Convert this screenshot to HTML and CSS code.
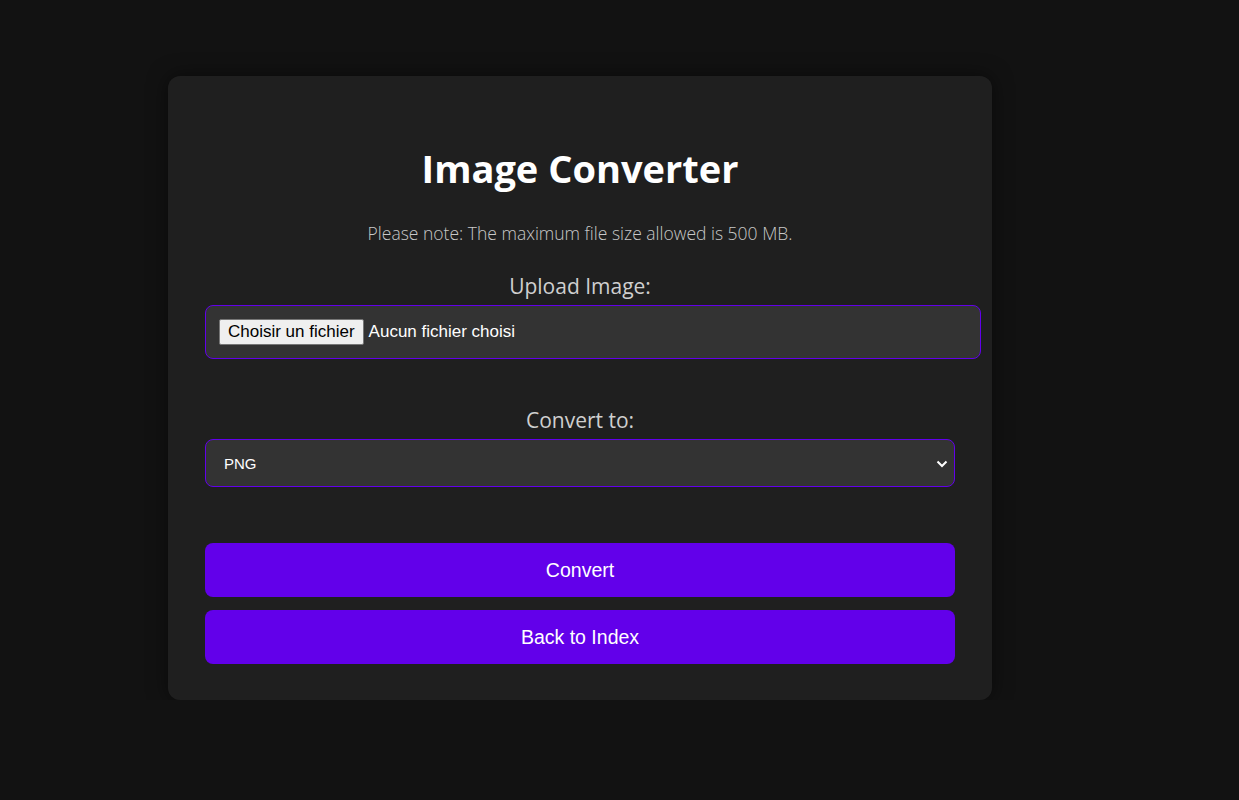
FILE: index.html
```html
<!DOCTYPE html>
<html lang="fr">
<head>
<meta charset="utf-8">
<title>Image Converter</title>
<link rel="stylesheet" href="styles.css">
</head>
<body>
<main class="card">
  <h1 class="title">Image Converter</h1>
  <p class="note">Please note: The maximum file size allowed is 500 MB.</p>
  <form class="form">
    <label class="label" for="file">Upload Image:</label>
    <div class="file-input">
      <label class="file-btn" for="file">Choisir un fichier</label>
      <span class="file-name">Aucun fichier choisi</span>
      <input id="file" class="file-hidden" type="file">
    </div>
    <label class="label label-convert" for="fmt">Convert to:</label>
    <div class="select-wrap">
      <select id="fmt" class="select">
        <option>PNG</option>
        <option>JPEG</option>
        <option>WEBP</option>
        <option>GIF</option>
      </select>
      <svg class="chev" width="12" height="8" viewBox="0 0 12 8"><path d="M1.5 1.5 L6 6 L10.5 1.5" fill="none" stroke="#ffffff" stroke-width="2"/></svg>
    </div>
    <button type="button" class="btn btn-convert">Convert</button>
    <button type="button" class="btn btn-back">Back to Index</button>
  </form>
</main>
</body>
</html>
```
FILE: styles.css
```css
html, body {
  margin: 0;
  padding: 0;
  background: #121212;
}
body {
  font-family: "Open Sans", "Noto Sans", sans-serif;
  color: #ffffff;
  padding-top: 76px;
  padding-left: 168px;
}
.card {
  width: 824px;
  box-sizing: border-box;
  background: #1f1f1f;
  border-radius: 12px;
  padding: 0 37px 36px;
  box-shadow: 0 0 20px rgba(0, 0, 0, 0.5);
  overflow: hidden;
}
.title {
  margin: 0;
  padding-top: 70px;
  font-size: 38px;
  line-height: 44px;
  font-weight: 700;
  text-align: center;
  color: #ffffff;
}
.note {
  margin: 32px 0 0;
  font-size: 17.5px;
  line-height: 22px;
  font-weight: 300;
  color: #c8c8c8;
  text-align: center;
}
.form {
  display: flex;
  flex-direction: column;
}
.label {
  display: block;
  margin-top: 30px;
  font-size: 21px;
  line-height: 24px;
  font-weight: 400;
  color: #cfcfcf;
  text-align: center;
}
.label-convert {
  margin-top: 49px;
}
.file-input {
  position: relative;
  margin-top: 7px;
  width: 776px;
  height: 54px;
  box-sizing: border-box;
  padding: 0 13px;
  display: flex;
  align-items: center;
  gap: 5px;
  background: #333333;
  border: 1px solid #6200ea;
  border-radius: 8px;
  font-family: "Liberation Sans", Arial, sans-serif;
  font-size: 17px;
}
.file-btn {
  display: inline-block;
  height: 26px;
  box-sizing: border-box;
  padding: 0 8px;
  line-height: 24px;
  background: #efefef;
  color: #000000;
  border: 1px solid #767676;
  border-radius: 2px;
}
.file-name {
  color: #ffffff;
}
.file-hidden {
  position: absolute;
  width: 1px;
  height: 1px;
  opacity: 0;
  overflow: hidden;
}
.select-wrap {
  position: relative;
  margin-top: 7px;
}
.select {
  appearance: none;
  -webkit-appearance: none;
  width: 100%;
  height: 48px;
  box-sizing: border-box;
  padding: 0 16px 0 18px;
  background: #333333;
  color: #ffffff;
  border: 1px solid #6200ea;
  border-radius: 8px;
  font-family: "Liberation Sans", Arial, sans-serif;
  font-size: 15px;
  outline: none;
}
.chev {
  position: absolute;
  right: 7px;
  top: 21px;
  pointer-events: none;
}
.btn {
  display: block;
  width: 100%;
  height: 54px;
  border: none;
  border-radius: 8px;
  background: #6200ea;
  color: #ffffff;
  font-family: "Liberation Sans", Arial, sans-serif;
  font-size: 19.5px;
  cursor: pointer;
}
.btn-convert {
  margin-top: 56px;
}
.btn-back {
  margin-top: 13px;
}
```
